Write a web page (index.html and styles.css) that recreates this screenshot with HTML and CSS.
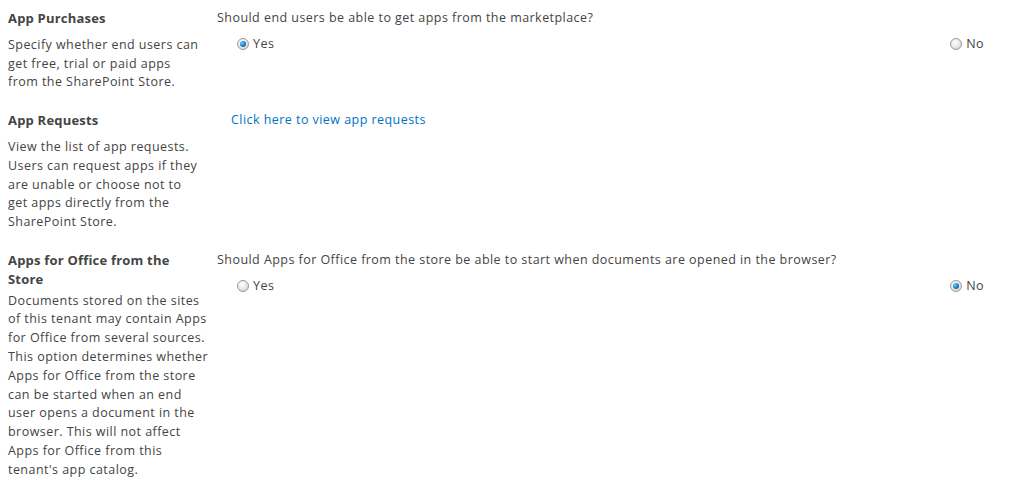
FILE: index.html
```html
<!DOCTYPE html>
<html lang="en">
<head>
    <meta charset="UTF-8">
    <title>Apps Settings</title>
    <link rel="stylesheet" href="styles.css">
</head>
<body>
    <div class="settings">
        <!-- App purchases -->
        <div class="section">
            <div class="section-info">
                <h3 class="section-title">App Purchases</h3>
                <p class="section-desc">Specify whether end users can<br>get free, trial or paid apps<br>from the SharePoint Store.</p>
            </div>
            <div class="section-body">
                <div class="question">Should end users be able to get apps from the marketplace?</div>
                <div class="choices">
                    <label class="choice"><span class="radio checked"></span>Yes</label>
                    <label class="choice"><span class="radio"></span>No</label>
                </div>
            </div>
        </div>

        <!-- App requests -->
        <div class="section">
            <div class="section-info">
                <h3 class="section-title">App Requests</h3>
                <p class="section-desc">View the list of app requests.<br>Users can request apps if they<br>are unable or choose not to<br>get apps directly from the<br>SharePoint Store.</p>
            </div>
            <div class="section-body">
                <a class="link" href="#">Click here to view app requests</a>
            </div>
        </div>

        <!-- Apps for Office -->
        <div class="section">
            <div class="section-info">
                <h3 class="section-title tight">Apps for Office from the<br>Store</h3>
                <p class="section-desc">Documents stored on the sites<br>of this tenant may contain Apps<br>for Office from several sources.<br>This option determines whether<br>Apps for Office from the store<br>can be started when an end<br>user opens a document in the<br>browser. This will not affect<br>Apps for Office from this<br>tenant's app catalog.</p>
            </div>
            <div class="section-body">
                <div class="question">Should Apps for Office from the store be able to start when documents are opened in the browser?</div>
                <div class="choices loose">
                    <label class="choice"><span class="radio"></span>Yes</label>
                    <label class="choice"><span class="radio checked"></span>No</label>
                </div>
            </div>
        </div>
    </div>
</body>
</html>
```

FILE: styles.css
```css
* {
    margin: 0;
    padding: 0;
    box-sizing: border-box;
}

body {
    font-family: "Open Sans", "Noto Sans", sans-serif;
    font-size: 12.5px;
    line-height: 18.8px;
    letter-spacing: 0.45px;
    color: #444;
    background-color: #fff;
}

.settings {
    padding: 9px 28px 0 8px;
}

.section {
    display: flex;
    margin-bottom: 19px;
}

.section-info {
    width: 199px;
    flex-shrink: 0;
    white-space: nowrap;
}

.section-title {
    font-size: 13px;
    font-weight: bold;
    letter-spacing: 0.2px;
    color: #444;
    margin-bottom: 8px;
}

.section-title.tight {
    margin-bottom: 3px;
}

.section-body {
    flex: 1;
    padding-left: 10px;
}

.question {
    margin-bottom: 7px;
}

.choices {
    display: flex;
    justify-content: space-between;
    padding-left: 20px;
}

.choices.loose {
    margin-top: 2px;
}

.choice {
    display: flex;
    align-items: center;
    cursor: pointer;
}

.radio {
    width: 12px;
    height: 12px;
    border-radius: 50%;
    border: 1px solid #9a9a9a;
    background: radial-gradient(circle at 40% 35%, #fff 0%, #e6e6e6 55%, #c8c8c8 100%);
    margin-right: 4px;
    position: relative;
}

.radio.checked::after {
    content: "";
    position: absolute;
    left: 2px;
    top: 2px;
    width: 6px;
    height: 6px;
    border-radius: 50%;
    background: radial-gradient(circle at 35% 35%, #7fd0ff 0%, #1a82c8 50%, #0b4f86 100%);
}

.link {
    display: inline-block;
    margin-left: 14px;
    color: #0072c6;
    text-decoration: none;
}
```
